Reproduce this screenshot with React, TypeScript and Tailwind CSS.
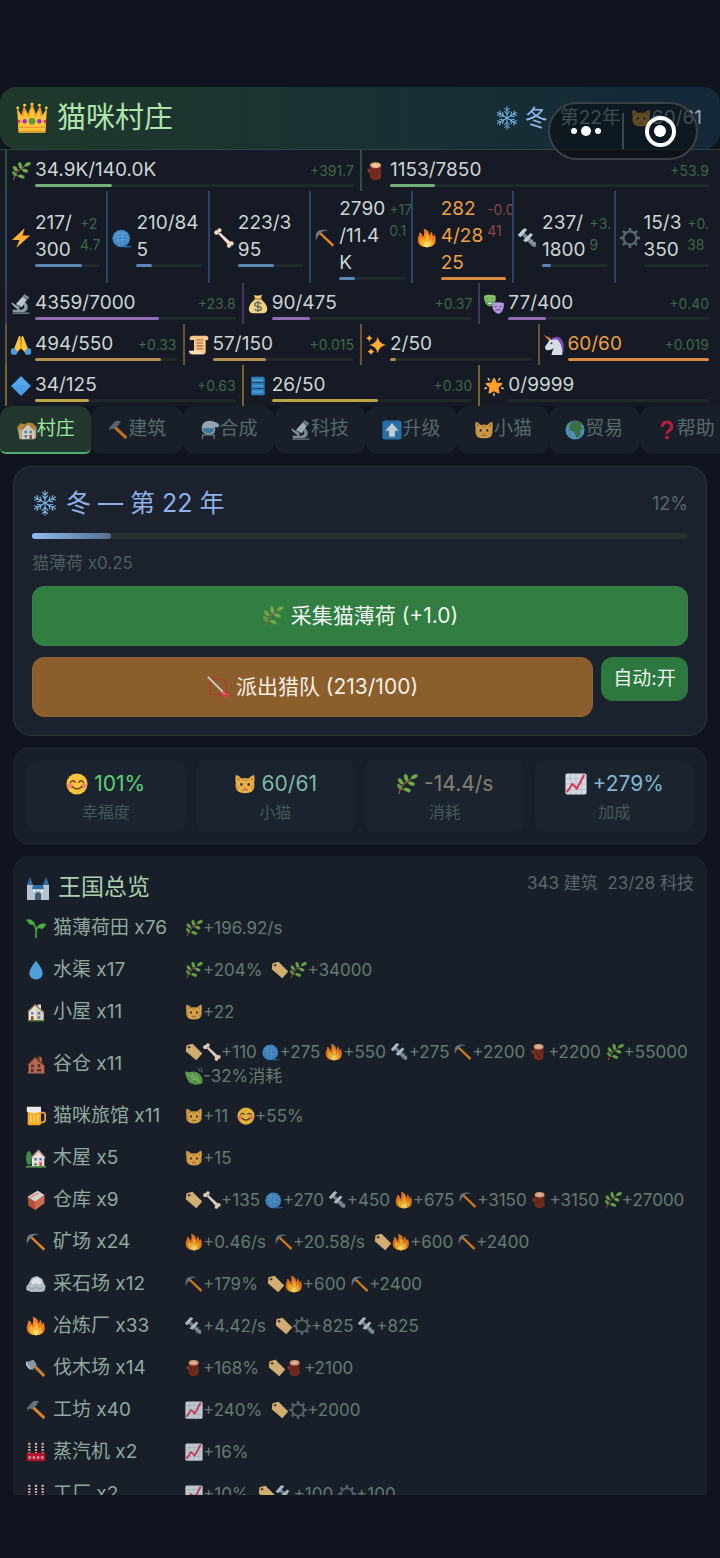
import type { ReactNode } from 'react';
import clsx from 'clsx';

// Icon artwork, all on a 24x24 grid
const ART: Record<string, ReactNode> = {
  crown: (
    <>
      <path d="M1 5l3 5 2-7 3 6 3-8 3 8 3-6 2 7 3-5-1 17H2z" fill="#f29a2e" />
      <path d="M1 5l4 7 2-6 2 6 3-8 3 8 2-6 2 6 4-7-1 18H2z" fill="#fcc53c" />
      <path d="M2 19h20M2 22h20" stroke="#e59a2b" strokeWidth="1" />
      <circle cx="12" cy="14.500" r="2.500" fill="#5a9a32" />
      <circle cx="6.500" cy="14.500" r="1.700" fill="#a02fc4" />
      <circle cx="17.500" cy="14.500" r="1.700" fill="#a02fc4" />
      <circle cx="2.200" cy="14.500" r="1.200" fill="#d83a55" />
      <circle cx="21.800" cy="14.500" r="1.200" fill="#d83a55" />
      <g fill="#fcc53c">
        <circle cx="1.300" cy="4.500" r="1.100" />
        <circle cx="6.500" cy="2.500" r="1.100" />
        <circle cx="12" cy="1.500" r="1.200" />
        <circle cx="17.500" cy="2.500" r="1.100" />
        <circle cx="22.700" cy="4.500" r="1.100" />
      </g>
    </>
  ),
  snow: (
    <g stroke="#7db9e6" strokeWidth="1" fill="none" strokeLinecap="round">
      {[0, 60, 120, 180, 240, 300].map((deg) => (
        <path key={deg} transform={`rotate(${deg} 12 12)`} d="M12 12V0.800M9.600 2.200L12 4.800l2.400-2.600M9.400 5.200L12 8l2.600-2.800" />
      ))}
    </g>
  ),
  cat: (
    <>
      <path d="M2 2q4 1 6 4 4-1 8 0 2-3 6-4 1 5 0 9 2 11-10 11T2 11Q1 6 2 2z" fill="#e9b04a" />
      <path d="M3.500 4l3 3-2.500 2zM20.500 4l-3 3 2.500 2z" fill="#c87a35" />
      <path d="M10 6v3M12 6v4M14 6v3M2.500 14l3 .5M2.500 17l3-.5M21.500 14l-3 .5M21.500 17l-3-.5" stroke="#c98b34" strokeWidth="1" />
      <ellipse cx="8" cy="12.500" rx="1.300" ry="1.600" fill="#3c2c20" />
      <ellipse cx="16" cy="12.500" rx="1.300" ry="1.600" fill="#3c2c20" />
      <path d="M10.500 15.500h3L12 17z" fill="#d6546a" />
      <path d="M9 18.500q2 1 3-1 1 2 3 1" stroke="#7a5026" strokeWidth="1" fill="none" />
    </>
  ),
  herb: (
    <>
      <path d="M3 23Q5 15 10 11t10-7M6 17l5 2M9 12L5 9M12 10l4 1" stroke="#9a6045" strokeWidth="1.300" fill="none" />
      <g fill="#5f9f42">
        <ellipse cx="20" cy="4" rx="4" ry="2.300" transform="rotate(-25 20 4)" />
        <ellipse cx="11" cy="5" rx="2.300" ry="4" transform="rotate(-15 11 5)" />
        <ellipse cx="5" cy="9" rx="2.300" ry="3.800" transform="rotate(-38 5 9)" />
        <ellipse cx="4" cy="15" rx="2" ry="3.500" transform="rotate(-40 4 15)" />
        <ellipse cx="17" cy="11.500" rx="3.800" ry="2.200" transform="rotate(22 17 11.500)" />
        <ellipse cx="12.500" cy="18.500" rx="4" ry="2.200" transform="rotate(22 12.500 18.500)" />
      </g>
      <path d="M11 3v5M18 5l4-2M4 8l3 3M15 11l4 1M10 18l4 1" stroke="#8cc466" strokeWidth="1" />
    </>
  ),
  log: (
    <>
      <path d="M5 5v15q7 6 13 0V5z" fill="#7c2d1e" />
      <path d="M5 10l-3-1v4l3 2z" fill="#8f3a26" />
      <path d="M8.500 10v8M12 11v9M15.500 9v7" stroke="#5a1d14" strokeWidth="1" />
      <ellipse cx="11.500" cy="5" rx="6.500" ry="3.600" fill="#e9a680" />
      <ellipse cx="11.500" cy="5" rx="3.600" ry="1.800" fill="#f5c9a6" />
    </>
  ),
  bolt: (
    <>
      <path d="M16 1L1 14.500h9L7 23l16-14h-9z" fill="#ffa726" />
      <path d="M16 1L5 13h9L7 23" fill="none" stroke="#ffc04d" strokeWidth="1" />
    </>
  ),
  yarn: (
    <>
      <circle cx="11" cy="12.500" r="10.500" fill="#3f86c6" />
      <path d="M3 8q8-4 16 0M1.500 12.500q9-5 19-1M3 17q8-5 17-2M8 3q-3 8 1 19M14 3q-3 8-1 19" stroke="#6aa9da" strokeWidth="0.900" fill="none" />
      <path d="M12 22q6 1 11 0" stroke="#2d6fae" strokeWidth="1.600" fill="none" />
    </>
  ),
  bone: (
    <g fill="#f6dfca">
      <path d="M5 7l2-2 13 12-3 3z" />
      <circle cx="3" cy="5.500" r="2.700" />
      <circle cx="6.500" cy="2.700" r="2.500" />
      <circle cx="21" cy="18.500" r="2.600" />
      <circle cx="18" cy="21.300" r="2.500" />
    </g>
  ),
  pick: (
    <>
      <path d="M7 5l16 15-2 2.500L5 7z" fill="#e0841c" />
      <path d="M1 15Q0 4 5 3q6-2 11 0-6 0-8 2l-3 3q-3 3-4 7z" fill="#6f7d87" />
    </>
  ),
  fire: (
    <>
      <path d="M12 23C4 23 1 19 1 14c0-4 2-5 2-9 3 1 4 4 4 6C9 9 9 4 8 1c5 1 7 5 7 8 1-1 2-2 1-5 3 2 3 4 3 6 1 0 2-1 2-3 3 9 2 16-9 16z" fill="#f07d1d" />
      <path d="M12 23c-5 0-8-3-8-7 0-2 1-3 2-5 1 2 2 3 3 3 2-1 2-4 1-7 4 2 5 5 5 8 1 0 2-1 2-3 5 8 1 11-5 11z" fill="#fdb42e" />
      <path d="M12 23c-4 0-5-4-1-7 0 2 2 2 3 0 3 4 1 7-2 7z" fill="#ffe070" />
    </>
  ),
  screw: (
    <>
      <path d="M7 5l15 14-1 4-4-1L4 8z" fill="#76858f" />
      <path d="M12 14l3-3M15 17l3-3M18 20l3-3" stroke="#b5c1c9" strokeWidth="1.200" />
      <path d="M8 0l3 2-8 9-3-2zM15 6l3 2-8 9-4-2z" fill="#b9c8d3" />
      <path d="M7 1L0 9" stroke="#e4edf2" strokeWidth="1" />
    </>
  ),
  gear: (
    <g fill="none" stroke="#5b6770">
      <circle cx="12" cy="12" r="7.800" strokeWidth="2.600" />
      {[0, 45, 90, 135, 180, 225, 270, 315].map((deg) => (
        <path key={deg} transform={`rotate(${deg} 12 12)`} d="M12 0v4" strokeWidth="3.200" />
      ))}
    </g>
  ),
  microscope: (
    <>
      <path d="M15 9q6 3 5 8-1 4-6 5H2v-3h10q4-1 4-4 0-2-2-3z" fill="#8b9ba6" />
      <path d="M14 3l5 4-6 9-7-4z" fill="#b9c6cf" />
      <path d="M16 0l6 4-2 3-6-4zM6 12l5 4-2 2-5-3z" fill="#788994" />
      <path d="M1 11l9 8" stroke="#9fb0ba" strokeWidth="2" />
      <path d="M2 22h20v2H2z" fill="#60727d" />
    </>
  ),
  money: (
    <>
      <path d="M7 1q5 2 10 0l-2 5q8 6 8 12 0 5-5 5H6q-5 0-5-5Q1 12 9 6z" fill="#f6d182" />
      <path d="M7 6h10" stroke="#a87838" strokeWidth="1.600" />
      <path d="M16 12q-1-2-4-2-4 0-4 2.500T12 15t4 2.500T12 20q-3 0-4-2M12 8.500v13" stroke="#5b6b62" strokeWidth="1.600" fill="none" />
    </>
  ),
  masks: (
    <>
      <path d="M0 2q7-2 14 0 1 11-7 13Q0 13 0 2z" fill="#85c36a" />
      <path d="M2.500 6q1.500-1.500 3 0M8.500 6q1.500-1.500 3 0M3 9q4 2 8 0-1 4-4 4T3 9z" stroke="#3f7034" strokeWidth="1" fill="#e0f2d8" />
      <path d="M10 11q7-2 14 0 0 11-7 13-8-3-7-13z" fill="#b59ae0" />
      <path d="M12.500 15q1.500 1.500 3 0M18.500 15q1.500 1.500 3 0M13.500 20q3.500-3 7 0" stroke="#5e4496" strokeWidth="1.200" fill="none" />
    </>
  ),
  pray: (
    <>
      <path d="M11.500 2q-2-2-3 2L4 16l3 5 5-5zM12.500 2q2-2 3 2L20 16l-3 5-5-5z" fill="#fbc639" />
      <path d="M12 2v14" stroke="#d79420" strokeWidth="1" />
      <path d="M0 17l4-2 4 6-2 3-6-1zM24 17l-4-2-4 6 2 3 6-1z" fill="#4b9be0" />
    </>
  ),
  scroll: (
    <>
      <path d="M5 1h15q4 0 3 5h-3v15q0 2-4 2H3l1-4h2V6H1Q0 1 5 1z" fill="#f4c98c" />
      <path d="M0 19h15q0 4 4 4H3q-3 0-3-4z" fill="#fae0b4" />
      <path d="M9 6h8M9 9.500h8M9 13h8M9 16.500h8" stroke="#b35a2c" strokeWidth="1.300" />
    </>
  ),
  sparkles: (
    <g fill="#ffae33">
      <path d="M14 2q1.500 8.500 10 10-8.500 1.500-10 10-1.500-8.500-10-10 8.500-1.500 10-10z" />
      <path d="M4 0q.7 3.300 4 4-3.300.7-4 4-.7-3.300-4-4 3.300-.7 4-4z" />
      <path d="M6 16q.7 3.300 4 4-3.300.7-4 4-.7-3.300-4-4 3.300-.7 4-4z" />
    </g>
  ),
  unicorn: (
    <>
      <path d="M9 4Q18-1 22 7q3 5 1 14l-4 1z" fill="#7b4bb8" />
      <path d="M7 4l2 2q7-3 10 3 3 5 3 15H9q1-6 3-8-6 3-9 2-3-2-1-5 4-4 5-9z" fill="#d5dee4" />
      <path d="M0 0l8 4-2 3z" fill="#e57b45" />
      <circle cx="9" cy="10" r="1.200" fill="#2b3a44" />
    </>
  ),
  diamond: (
    <>
      <path d="M12 0l12 12-12 12L0 12z" fill="#4a9fe8" />
      <path d="M12 1.500l9.500 9.500h-19z" fill="#55a7ec" />
    </>
  ),
  blueprint: (
    <>
      <path d="M4 1h14l2 1v21H4z" fill="#2f80bf" />
      <path d="M4 8h16M4 15h16" stroke="#1b4f7c" strokeWidth="1.400" />
      <path d="M5 5h13M5 12h13M5 19h13" stroke="#59a6dc" strokeWidth="1.400" />
    </>
  ),
  star: (
    <>
      <path d="M12 3l2.700 5.800 6.300.7-4.700 4.300 1.300 6.200-5.600-3-5.600 3 1.300-6.200L3 9.500l6.300-.7z" fill="#ff9f2e" stroke="#ff9f2e" strokeWidth="2" strokeLinejoin="round" />
      <path d="M5 3l1.500 2M19 3l-1.500 2M1 15l2-.6M23 15l-2-.6M12 21v2.500" stroke="#ffd37a" strokeWidth="1.600" strokeLinecap="round" />
    </>
  ),
  houses: (
    <>
      <path d="M0 9l4-5 5 1 4-2 6 1 5 5-1 3H1z" fill="#c98f3c" />
      <path d="M1 11h8v12H3zM18 11h5v11h-5z" fill="#d8b98c" />
      <path d="M6 12l7-7 8 7v11H6z" fill="#ece4d8" />
      <path d="M5 13l8-8 8 8" stroke="#b98a6a" strokeWidth="1.200" fill="none" />
      <path d="M9 13h3v3H9zM15 13h3v3h-3zM9 18h3v3H9z" fill="#5c88b8" />
      <path d="M15 18h3v5h-3z" fill="#b5563f" />
    </>
  ),
  hammer: (
    <>
      <path d="M9 7l14 13-2 3L6 9z" fill="#e0841c" />
      <path d="M1 10l7-8q3-2 8 0-3 1-3 4l-6 5-3-1-1 3z" fill="#64727c" />
    </>
  ),
  still: (
    <>
      <path d="M2 10Q2 2 11 1q5 0 12 4l-1 4-4-1q2 9-7 10-9-1-9-8z" fill="#a9bcc8" />
      <path d="M3 10h14q0 6-7 6t-7-6z" fill="#3c86b8" />
      <path d="M3 17v6M17 17v6M2 18h16" stroke="#6e7f8a" strokeWidth="1.600" />
    </>
  ),
  up: (
    <>
      <rect x="0.500" y="0.500" width="23" height="23" rx="3" fill="#2e7cbd" />
      <path d="M12 4l8 9h-4.500v7h-7v-7H4z" fill="#dfeaf2" />
    </>
  ),
  globe: (
    <>
      <circle cx="12" cy="12" r="11.500" fill="#5a9fd2" />
      <path d="M8 2q8-2 12 2l-1 4 3 3-4 1 1 6-5 4-3-8-6-2q0-6 3-10z" fill="#3e7f49" />
      <path d="M3 6q2-2 3-2l-1 4zM4 16l3 2-1 2z" fill="#6fae64" />
    </>
  ),
  question: (
    <>
      <path d="M6.500 8q0-5.500 5.500-5.500T17.500 8q0 3-3 4.500-2.500 1.500-2.500 4" stroke="#cc1f45" strokeWidth="3.800" fill="none" />
      <circle cx="12" cy="21" r="2.300" fill="#cc1f45" />
    </>
  ),
  bow: (
    <>
      <path d="M4 2q14 1 15 3 3 3 2 16M4 2L3 20l18 1" stroke="#a8402d" strokeWidth="1.500" fill="none" />
      <path d="M1 1l19 19" stroke="#c9d3d9" strokeWidth="1.800" />
      <path d="M17 15l1 4 5 5 1-4zM15 18l4 1 4 5-5-1z" fill="#d5444a" />
    </>
  ),
  smile: (
    <>
      <circle cx="12" cy="12" r="11.500" fill="#fbc33c" />
      <circle cx="4.500" cy="14" r="3" fill="#f08a6c" />
      <circle cx="19.500" cy="14" r="3" fill="#f08a6c" />
      <path d="M5 10q2.500-3 5 0M14 10q2.500-3 5 0M7 15q5 5 10 0" stroke="#5c3b20" strokeWidth="1.500" fill="none" strokeLinecap="round" />
    </>
  ),
  chart: (
    <>
      <rect x="0.500" y="0.500" width="23" height="23" rx="2" fill="#d3dce2" />
      <path d="M6 1v22M12 1v22M18 1v22M1 6h22M1 12h22M1 18h22" stroke="#a9b8c4" strokeWidth="0.800" />
      <path d="M2 21l6-9 5 5 8-15" stroke="#dd3352" strokeWidth="2.200" fill="none" />
    </>
  ),
  castle: (
    <>
      <path d="M1 8h6v3h10V8h6v15H1z" fill="#b7c4cf" />
      <path d="M1 8l3-8 3 8zM17 8l3-8 3 8zM7 8h10l1 4H6z" fill="#2f6da8" />
      <path d="M9 23v-6q3-4 6 0v6z" fill="#435f78" />
      <path d="M7 13h2v2H7zM11 13h2v1h-2zM15 13h2v2h-2z" fill="#eef3f6" />
    </>
  ),
  sprout: (
    <>
      <path d="M12 24V14Q11 7 5 4M12 16q1-6 7-8" stroke="#3f9a3a" strokeWidth="2.200" fill="none" />
      <path d="M0 2q7-2 11 5-5 3-8-1T0 2zM24 7q-8-2-10 4 5 4 8 0t2-4z" fill="#4dab44" />
    </>
  ),
  drop: <path d="M12 1q8 10 8 15a8 7.500 0 01-16 0q0-5 8-15z" fill="#4f9fdd" />,
  house: (
    <>
      <path d="M3 11l8-8 3 2V3h4v6l3 3v10H3z" fill="#ece4d0" />
      <path d="M11 3l10 9v10h-9V11z" fill="#d9cfb6" />
      <path d="M2 12l9-9 10 9" stroke="#8c6f58" strokeWidth="1.500" fill="none" />
      <path d="M6 12h3v3H6zM14 12h3v3h-3zM14 17h3v3h-3z" fill="#4f78b8" />
      <path d="M6 17h3v5H6z" fill="#8a4b2c" />
      <path d="M2 22.500h20" stroke="#53803c" strokeWidth="1.600" />
    </>
  ),
  barn: (
    <>
      <path d="M3 12l8-8 3 3 2-5 3 3v6l3 3v9H3z" fill="#b9674f" />
      <path d="M2 13l9-9 5 5M16 2v7l5 4" stroke="#70392c" strokeWidth="1.500" fill="none" />
      <path d="M6 13h4v3H6zM14 12h3v4h-3zM6 18h3v4H6zM13 18h5v3h-5z" fill="#54302a" />
      <path d="M2 22.500h20" stroke="#99705a" strokeWidth="1.600" />
    </>
  ),
  tag: (
    <>
      <path d="M2 3l8-2 13 13-8 9L1 11z" fill="#e6bd7a" />
      <circle cx="5.500" cy="5.500" r="1.600" fill="#4f3a28" />
    </>
  ),
  leaf: (
    <>
      <path d="M0 6q3 0 6 1 8-3 14 3 5 6 3 12-9 3-15 0T0 6z" fill="#5fa14b" />
      <path d="M3 9l17 11M9 8l3 6M15 10l2 7M8 18l5-2" stroke="#a4d488" strokeWidth="1" fill="none" />
      <path d="M17 2q3 0 3 4M21 1q2 2 1 6" stroke="#477f9b" strokeWidth="1.300" fill="none" />
    </>
  ),
  beer: (
    <>
      <path d="M17 8h4q2 0 2 3v5q0 4-6 4" stroke="#e3a43d" strokeWidth="2.200" fill="none" />
      <path d="M2 6h16v15q0 2-2 2H4q-2 0-2-2z" fill="#f6a925" />
      <path d="M6 10v10M10 10v10M14 10v10" stroke="#fcd16b" strokeWidth="1.800" />
      <path d="M1 1h17v6q-8 3-17 0z" fill="#eee9f0" />
    </>
  ),
  garden: (
    <>
      <path d="M7 12l8-8 7 7v11H7z" fill="#ece1d4" />
      <path d="M6 12l9-9 8 9" stroke="#c9a596" strokeWidth="1.600" fill="none" />
      <path d="M10 12h3v3h-3zM16 12h3v3h-3zM10 18h3v3h-3z" fill="#5577a8" />
      <path d="M16 17h3v5h-3z" fill="#c0593e" />
      <ellipse cx="3.500" cy="12" rx="3.500" ry="8.500" fill="#3f8c46" />
      <path d="M0 22.500h24" stroke="#5b9948" strokeWidth="2" />
    </>
  ),
  box: (
    <>
      <path d="M2 8l12-7 8 5v10l-11 8-8-5z" fill="#b5503c" />
      <path d="M2 8l12-7 8 5-11 8z" fill="#cfd3d4" />
      <path d="M11 14l11-8v10l-11 8z" fill="#cd6a52" />
      <path d="M4 8l10-5 2 1-10 6z" fill="#e8907a" />
    </>
  ),
  rock: (
    <>
      <path d="M1 15l3-4 3-6 6-2 6 3 2 5 2 4-1 5-4 1H6l-5-2z" fill="#b3bcc5" strokeLinejoin="round" stroke="#b3bcc5" strokeWidth="1" />
      <path d="M6 10l3-5 5-1 4 3 1 4-4 2-3-2-4 2z" fill="#dbe1e6" />
      <path d="M3 16l5 2 4-2 4 2 5-2" stroke="#8d98a2" strokeWidth="1" fill="none" />
    </>
  ),
  axe: (
    <>
      <path d="M9 6l14 14-2 3L7 9z" fill="#cf842c" />
      <path d="M9 2l4 6-4 4 0 2-3 0Q0 12 0 4q4 1 6-1z" fill="#8799a5" />
      <path d="M0 5q1 5 5 8" stroke="#c5d2da" strokeWidth="1.600" fill="none" />
    </>
  ),
  factory: (
    <>
      <path d="M4 1v13M12 1v13M20 1v13" stroke="#d6a5a9" strokeWidth="2.600" strokeDasharray="2.500 1.200" />
      <path d="M1 13h22v10H1z" fill="#b3162f" />
      <path d="M3 17h3v3H3zM8 17h3v3H8zM13 17h3v3h-3zM18 17h3v3h-3z" fill="#e0949c" />
    </>
  ),
};

function Icon({ name, className = 'size-5' }: { name: string; className?: string }) {
  return (
    <svg viewBox="0 0 24 24" aria-hidden="true" className={clsx('inline-block shrink-0', className)}>
      {ART[name]}
    </svg>
  );
}

interface Resource {
  icon: string;
  value: string;
  rate?: string;
  fill: number;
  full?: boolean;
  negative?: boolean;
}

interface ResourceRow {
  border: string;
  bar: string;
  items: Resource[];
}

// Line breaks are part of the value in the narrow cells
const RESOURCES: ResourceRow[] = [
  {
    border: 'border-[#2b5239]',
    bar: 'bg-[#74ae78]',
    items: [
      { icon: 'herb', value: '34.9K/140.0K', rate: '+391.7', fill: 24 },
      { icon: 'log', value: '1153/7850', rate: '+53.9', fill: 14 },
    ],
  },
  {
    border: 'border-[#2b4469]',
    bar: 'bg-[#5d85b5]',
    items: [
      { icon: 'bolt', value: '217/\n300', rate: '+2\n4.7', fill: 72 },
      { icon: 'yarn', value: '210/84\n5', fill: 24 },
      { icon: 'bone', value: '223/3\n95', fill: 56 },
      { icon: 'pick', value: '2790\n/11.4\nK', rate: '+17\n0.1', fill: 24 },
      { icon: 'fire', value: '282\n4/28\n25', rate: '-0.0\n41', fill: 100, full: true, negative: true },
      { icon: 'screw', value: '237/\n1800', rate: '+3.\n9', fill: 13 },
      { icon: 'gear', value: '15/3\n350', rate: '+0.\n38', fill: 0 },
    ],
  },
  {
    border: 'border-[#483566]',
    bar: 'bg-[#8f6cb5]',
    items: [
      { icon: 'microscope', value: '4359/7000', rate: '+23.8', fill: 62 },
      { icon: 'money', value: '90/475', rate: '+0.37', fill: 19 },
      { icon: 'masks', value: '77/400', rate: '+0.40', fill: 19 },
    ],
  },
  {
    border: 'border-[#6b5530]',
    bar: 'bg-[#b58f50]',
    items: [
      { icon: 'pray', value: '494/550', rate: '+0.33', fill: 89 },
      { icon: 'scroll', value: '57/150', rate: '+0.015', fill: 38 },
      { icon: 'sparkles', value: '2/50', fill: 4 },
      { icon: 'unicorn', value: '60/60', rate: '+0.019', fill: 100, full: true },
    ],
  },
  {
    border: 'border-[#766426]',
    bar: 'bg-[#bda545]',
    items: [
      { icon: 'diamond', value: '34/125', rate: '+0.63', fill: 27 },
      { icon: 'blueprint', value: '26/50', rate: '+0.30', fill: 53 },
      { icon: 'star', value: '0/9999', fill: 0 },
    ],
  },
];

const TABS = [
  { icon: 'houses', label: '村庄' },
  { icon: 'hammer', label: '建筑' },
  { icon: 'still', label: '合成' },
  { icon: 'microscope', label: '科技' },
  { icon: 'up', label: '升级' },
  { icon: 'cat', label: '小猫' },
  { icon: 'globe', label: '贸易' },
  { icon: 'question', label: '帮助' },
];

const STATS = [
  { icon: 'smile', value: '101%', label: '幸福度', color: 'text-[#5fd07a]' },
  { icon: 'cat', value: '60/61', label: '小猫', color: 'text-[#7fb8a8]' },
  { icon: 'herb', value: '-14.4/s', label: '消耗', color: 'text-[#85806f]' },
  { icon: 'chart', value: '+279%', label: '加成', color: 'text-[#82b7cf]' },
];

// :name: in an effect stands for an icon
const BUILDINGS = [
  { icon: 'sprout', name: '猫薄荷田 x76', effects: [':herb:+196.92/s'] },
  { icon: 'drop', name: '水渠 x17', effects: [':herb:+204%', ':tag::herb:+34000'] },
  { icon: 'house', name: '小屋 x11', effects: [':cat:+22'] },
  {
    icon: 'barn',
    name: '谷仓 x11',
    effects: [
      ':tag::bone:+110 :yarn:+275 :fire:+550 :screw:+275 :pick:+2200 :log:+2200 :herb:+55000',
      ':leaf:-32%消耗',
    ],
  },
  { icon: 'beer', name: '猫咪旅馆 x11', effects: [':cat:+11', ':smile:+55%'] },
  { icon: 'garden', name: '木屋 x5', effects: [':cat:+15'] },
  {
    icon: 'box',
    name: '仓库 x9',
    effects: [':tag::bone:+135 :yarn:+270 :screw:+450 :fire:+675 :pick:+3150 :log:+3150 :herb:+27000'],
  },
  { icon: 'pick', name: '矿场 x24', effects: [':fire:+0.46/s', ':pick:+20.58/s', ':tag::fire:+600 :pick:+2400'] },
  { icon: 'rock', name: '采石场 x12', effects: [':pick:+179%', ':tag::fire:+600 :pick:+2400'] },
  { icon: 'fire', name: '冶炼厂 x33', effects: [':screw:+4.42/s', ':tag::gear:+825 :screw:+825'] },
  { icon: 'axe', name: '伐木场 x14', effects: [':log:+168%', ':tag::log:+2100'] },
  { icon: 'hammer', name: '工坊 x40', effects: [':chart:+240%', ':tag::gear:+2000'] },
  { icon: 'factory', name: '蒸汽机 x2', effects: [':chart:+16%'] },
  { icon: 'factory', name: '工厂 x2', effects: [':chart:+10%', ':tag::screw:+100 :gear:+100'] },
];

function Effect({ text }: { text: string }) {
  return (
    <span className="whitespace-nowrap">
      {text.split(/:(\w+):/).map((part, i) =>
        i % 2 ? <Icon key={i} name={part} className="size-[18px] align-[-3px] opacity-90" /> : part,
      )}
    </span>
  );
}

function ResourceCell({ item, border, bar }: { item: Resource; border: string; bar: string }) {
  return (
    <div className={clsx('flex min-w-0 flex-1 basis-0 items-center gap-1 border-l-2 pt-1 pr-1.5 pb-[3px] pl-1', border)}>
      <Icon name={item.icon} />
      <div className="min-w-0 flex-1">
        <div className="flex items-baseline justify-between gap-1 whitespace-pre">
          <span className={clsx('text-[19px] leading-[27px]', item.full ? 'text-[#eea043]' : 'text-[#cdd5d5]')}>
            {item.value}
          </span>
          {item.rate && (
            <span className={clsx('text-[14px] leading-[21px]', item.negative ? 'text-[#8c4548]' : 'text-[#3f6649]')}>
              {item.rate}
            </span>
          )}
        </div>
        <div className="mt-px h-[3px] rounded-full bg-[#20292b]">
          <div
            className={clsx('h-full rounded-full', item.full ? 'bg-[#d98a3e]' : bar)}
            style={{ width: `${item.fill}%` }}
          />
        </div>
      </div>
    </div>
  );
}

function Capsule() {
  return (
    <div className="absolute top-[15px] right-[22px] z-10 flex h-[58px] w-[150px] items-center rounded-full border-2 border-[#3a4245] bg-[#080d11]/60">
      <button type="button" aria-label="更多" className="flex flex-1 items-center justify-center gap-1">
        <span className="size-1.5 rounded-full bg-white" />
        <span className="size-2.5 rounded-full bg-white" />
        <span className="size-1.5 rounded-full bg-white" />
      </button>
      <span className="h-9 w-0.5 bg-[#3f484b]" />
      <button type="button" aria-label="关闭" className="flex flex-1 items-center justify-center">
        <span className="flex size-[31px] items-center justify-center rounded-full border-4 border-white">
          <span className="size-3 rounded-full bg-white" />
        </span>
      </button>
    </div>
  );
}

export default function App() {
  return (
    <div className="flex h-screen flex-col overflow-hidden bg-[#10141f] pt-[87px] pb-[63px] font-[Inter,'Noto_Sans_CJK_SC',sans-serif]">
      <div className="relative shrink-0">
        <header className="flex h-[62px] items-center justify-between rounded-2xl bg-linear-to-r from-[#20392b] to-[#142839] pr-[18px] pl-4">
          <h1 className="flex items-center gap-[9px] text-[29px] leading-9 text-[#aee5ad]">
            <Icon name="crown" className="size-8" />
            猫咪村庄
          </h1>
          <div className="flex items-center text-[19px] text-[#9aa8ad]">
            <Icon name="snow" className="mr-1.5 size-6" />
            <span className="mr-3 text-[23px] text-[#92b7e8]">冬</span>
            <span className="mr-2.5">第22年</span>
            <Icon name="cat" className="mr-px size-5" />
            <span>60/61</span>
          </div>
        </header>
        <Capsule />
      </div>

      {/* Resources */}
      <section className="shrink-0 border-t border-[#2b4540] bg-[#151a24] px-[5px]">
        {RESOURCES.map((row) => (
          <div key={row.items[0].icon} className="flex min-h-[41px]">
            {row.items.map((item) => (
              <ResourceCell key={item.icon} item={item} border={row.border} bar={row.bar} />
            ))}
          </div>
        ))}
      </section>

      <nav className="flex shrink-0 overflow-hidden">
        {TABS.map((tab, i) => (
          <button
            key={tab.label}
            type="button"
            className={clsx(
              'flex h-12 w-[12.7%] shrink-0 items-center justify-center border-b-2 pt-px text-[19px]',
              i === 0
                ? 'rounded-t-xl rounded-b-md border-[#4fae72] bg-[#21362c] text-[#9be6a0]'
                : 'rounded-xl border-transparent bg-[#191f29] text-[#586a6b]',
            )}
          >
            <Icon name={tab.icon} className="size-5 opacity-85" />
            {tab.label}
          </button>
        ))}
      </nav>

      <main className="flex min-h-0 flex-1 flex-col gap-[11px] overflow-hidden px-[13px] pt-3">
        {/* Season */}
        <section className="shrink-0 rounded-[18px] border border-[#2b3639] bg-[#1b212d] p-[18px]">
          <div className="flex items-center justify-between">
            <h2 className="flex items-center gap-2 text-[25px] leading-9 text-[#8fb0e8]">
              <Icon name="snow" className="size-[26px]" />
              冬 — 第 22 年
            </h2>
            <span className="text-[18px] text-[#5a676a]">12%</span>
          </div>
          <div className="mt-3 h-1.5 rounded-full bg-[#262e30]">
            <div className="h-full rounded-full bg-linear-to-r from-[#92bdf0] to-[#54708c]" style={{ width: '12%' }} />
          </div>
          <p className="mt-3 text-[17px] leading-6 text-[#4f5d5f]">猫薄荷 x0.25</p>
          <button
            type="button"
            className="mt-[11px] flex h-[60px] w-full items-center justify-center gap-[7px] rounded-xl border border-[#38804a] bg-[#317d42] text-[21px] text-[#eef6ef]"
          >
            <Icon name="herb" className="size-[22px]" />
            采集猫薄荷 (+1.0)
          </button>
          <div className="mt-[11px] flex items-start gap-2">
            <button
              type="button"
              className="flex h-[60px] flex-1 items-center justify-center gap-[7px] rounded-xl border border-[#8d6439] bg-[#8c5e2c] text-[21px] text-[#f6efe8]"
            >
              <Icon name="bow" className="size-[22px]" />
              派出猎队 (213/100)
            </button>
            <button type="button" className="h-11 w-[87px] rounded-xl bg-[#2d783e] text-[19px] text-[#eef6ef]">
              自动:开
            </button>
          </div>
        </section>

        {/* Stats */}
        <section className="grid shrink-0 grid-cols-4 gap-2.5 rounded-2xl bg-[#191f29] p-[13px]">
          {STATS.map((stat) => (
            <div key={stat.label} className="rounded-xl bg-[#1b242e] py-2.5 text-center">
              <p className={clsx('flex items-center justify-center gap-1.5 text-[21px] leading-7', stat.color)}>
                <Icon name={stat.icon} className="size-[22px]" />
                {stat.value}
              </p>
              <p className="mt-1 text-[16px] leading-5 text-[#47575a]">{stat.label}</p>
            </div>
          ))}
        </section>

        {/* Kingdom overview */}
        <section className="shrink-0 rounded-2xl bg-[#191f29] p-[13px]">
          <div className="mb-0.5 flex items-start justify-between">
            <h2 className="flex h-9 items-center gap-2 text-[23px] text-[#a9cfae]">
              <Icon name="castle" className="mt-1 size-6" />
              王国总览
            </h2>
            <span className="text-[17px] leading-7 whitespace-pre text-[#5a676a]">343 建筑  23/28 科技</span>
          </div>
          <ul>
            {BUILDINGS.map((b) => (
              <li key={b.name} className="flex min-h-[42px] items-center py-[7px]">
                <span className="flex w-[159px] shrink-0 items-center gap-[7px] text-[19px] leading-7 whitespace-nowrap text-[#91a89f]">
                  <Icon name={b.icon} />
                  {b.name}
                </span>
                <span className="flex flex-1 flex-wrap gap-x-[9px] text-[17px] leading-6 text-[#667b70]">
                  {b.effects.map((effect) => (
                    <Effect key={effect} text={effect} />
                  ))}
                </span>
              </li>
            ))}
          </ul>
        </section>
      </main>
    </div>
  );
}
